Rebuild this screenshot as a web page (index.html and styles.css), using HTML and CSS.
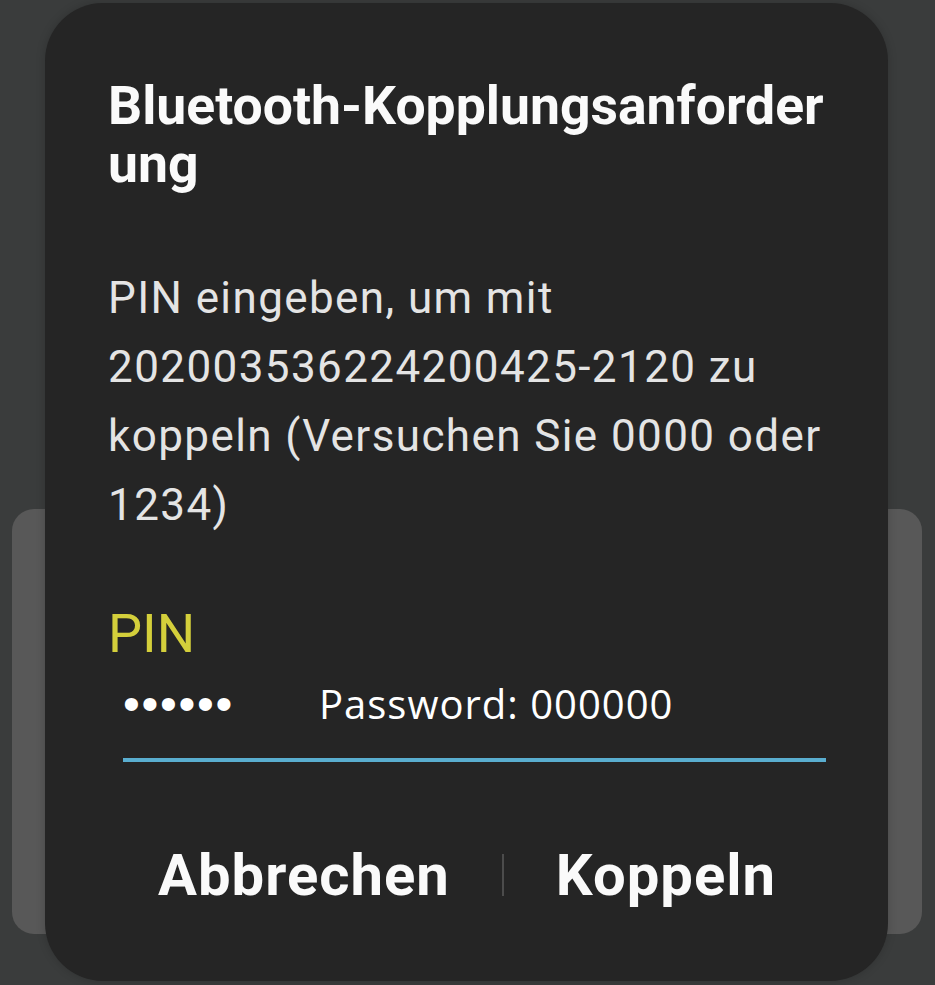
FILE: index.html
```html
<!DOCTYPE html>
<html lang="de">
<head>
<meta charset="utf-8">
<link rel="stylesheet" href="styles.css">
</head>
<body>
<div class="screen">
  <div class="back-card"></div>
  <div class="dialog">
    <h1 class="title">Bluetooth-Kopplungsanforder<br>ung</h1>
    <p class="message">PIN eingeben, um mit<br>202003536224200425-2120 zu<br>koppeln (Versuchen Sie 0000 oder<br>1234)</p>
    <div class="label">PIN</div>
    <div class="field">
      <span class="dots">••••••</span>
      <span class="hint">Password: 000000</span>
    </div>
    <div class="actions">
      <span class="btn btn-cancel">Abbrechen</span>
      <span class="divider"></span>
      <span class="btn btn-ok">Koppeln</span>
    </div>
  </div>
</div>
</body>
</html>
```
FILE: styles.css
```css
html, body {
  margin: 0;
  padding: 0;
}
body {
  background: #3a3c3c;
  width: 935px;
  height: 985px;
  overflow: hidden;
  font-family: Roboto, "Noto Sans", sans-serif;
}
.screen {
  position: relative;
  width: 935px;
  height: 985px;
}
.back-card {
  position: absolute;
  left: 12px;
  top: 509px;
  width: 910px;
  height: 425px;
  background: #585858;
  border-radius: 22px;
}
.dialog {
  position: absolute;
  left: 45px;
  top: 3px;
  width: 843px;
  height: 978px;
  box-sizing: border-box;
  background: #252525;
  border-radius: 58px;
  padding: 74px 62px 0 63px;
  box-shadow: 0 0 10px rgba(0, 0, 0, 0.18);
  display: flex;
  flex-direction: column;
}
.title {
  margin: 0;
  font-size: 53.5px;
  line-height: 58px;
  font-weight: 700;
  color: #fafafa;
}
.message {
  margin: 71px 0 0;
  font-size: 44px;
  line-height: 69px;
  letter-spacing: 1.4px;
  font-weight: 400;
  color: #e4e4e4;
}
.label {
  margin-top: 64px;
  font-size: 54px;
  line-height: 60px;
  color: #d4cf3b;
}
.field {
  margin: 16px 0 0 15px;
  padding: 0 0 30px 0;
  border-bottom: 4px solid #5aaed0;
  display: flex;
  align-items: center;
  height: 48px;
}
.dots {
  font-family: "Liberation Sans", sans-serif;
  font-size: 48px;
  line-height: 48px;
  letter-spacing: 1.7px;
  color: #ffffff;
  width: 196px;
}
.hint {
  font-family: "Open Sans", "Noto Sans", sans-serif;
  font-size: 40px;
  line-height: 48px;
  letter-spacing: 1px;
  color: #ffffff;
}
.actions {
  margin-top: 81px;
  padding-left: 50px;
  display: flex;
  align-items: center;
}
.btn {
  font-size: 58px;
  line-height: 64px;
  font-weight: 700;
  letter-spacing: 1px;
  color: #fafafa;
}
.divider {
  width: 2px;
  height: 42px;
  background: #4c4c4c;
  margin: 0 52px 0 52px;
}
```
